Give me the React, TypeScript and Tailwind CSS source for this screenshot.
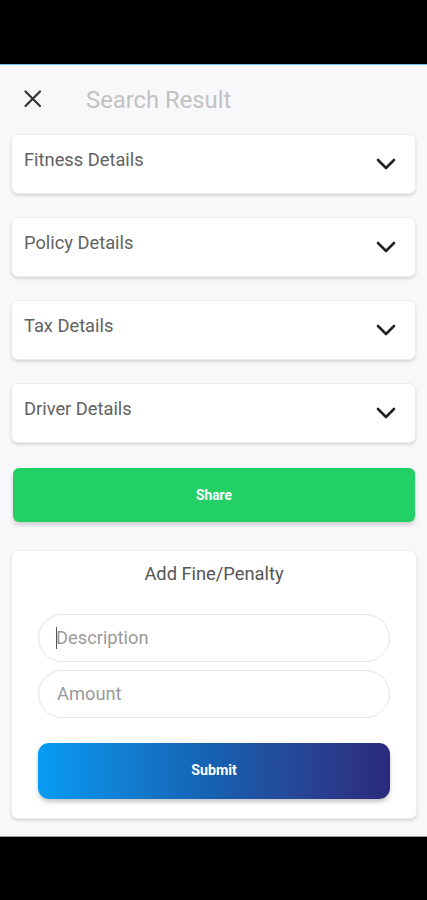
import React from "react";

function Chevron() {
  return (
    <svg width="20" height="12" viewBox="0 0 20 12" fill="none">
      <path d="M2 2 L10 10 L18 2" stroke="#222" strokeWidth="2.6" strokeLinecap="round" strokeLinejoin="round" />
    </svg>
  );
}

function DetailCard({ title }: { title: string }) {
  return (
    <div className="h-[60px] mx-[11px] bg-white rounded-[7px] border border-[#ececec] shadow-[0_2px_3px_rgba(0,0,0,0.12)] flex justify-between pl-[12px] pr-[19px]">
      <div className="pt-[14px] text-[18.3px] leading-[22px] text-[#626262]">{title}</div>
      <div className="pt-[23px]">
        <Chevron />
      </div>
    </div>
  );
}

export default function App() {
  return (
    <div className="w-[427px] h-[900px] flex flex-col bg-black" style={{ fontFamily: "Roboto, 'Noto Sans', Arial, sans-serif" }}>
      <div className="h-[64px] bg-black" />
      <div className="h-px bg-[#6cc4e8]" />
      <div className="h-[771px] bg-[#f8f8fa] flex flex-col">
        <div className="h-[69px] flex items-center pl-[23px]">
          <svg width="20" height="20" viewBox="0 0 20 20" fill="none" className="mt-[-1px]">
            <path d="M2.5 2.5 L17 17 M17 2.5 L2.5 17" stroke="#333" strokeWidth="2.2" strokeLinecap="round" />
          </svg>
          <div className="ml-[43px] text-[23.8px] leading-[28px] text-[#c2c2c2]">Search Result</div>
        </div>
        <div className="flex flex-col gap-[23px]">
          <DetailCard title="Fitness Details" />
          <DetailCard title="Policy Details" />
          <DetailCard title="Tax Details" />
          <DetailCard title="Driver Details" />
        </div>
        <div className="mt-[25px] mx-[13px] mr-[12px] h-[54px] rounded-[6px] bg-[#22d066] shadow-[0_3px_4px_rgba(0,0,0,0.18)] flex items-center justify-center text-white text-[13.8px] font-bold">
          Share
        </div>
        <div className="mt-[28px] mx-[11px] mr-[10px] bg-white rounded-[7px] border border-[#efefef] shadow-[0_2px_3px_rgba(0,0,0,0.12)] pt-[11px] pb-[19px] px-[26px]">
          <div className="text-center text-[18.3px] leading-[24px] text-[#555]">Add Fine/Penalty</div>
          <div className="mt-[28px] h-[48px] rounded-full border border-[#e4e4e4] bg-white flex items-center pl-[17px] text-[18.3px] text-[#9a9a9a]">
            <span className="w-px h-[22px] bg-[#555] mr-[-1px]" />
            <span>Description</span>
          </div>
          <div className="mt-[8px] h-[48px] rounded-full border border-[#e4e4e4] bg-white flex items-center pl-[18px] text-[18.3px] text-[#9a9a9a]">
            Amount
          </div>
          <div className="mt-[25px] h-[56px] rounded-[11px] bg-gradient-to-r from-[#079cf4] via-[#1560b0] to-[#2b2a7c] shadow-[0_3px_4px_rgba(0,0,0,0.22)] flex items-center justify-center text-white text-[14.2px] font-bold">
            Submit
          </div>
        </div>
      </div>
      <div className="h-px bg-[#9a9a9a]" />
      <div className="flex-1 bg-black" />
    </div>
  );
}
